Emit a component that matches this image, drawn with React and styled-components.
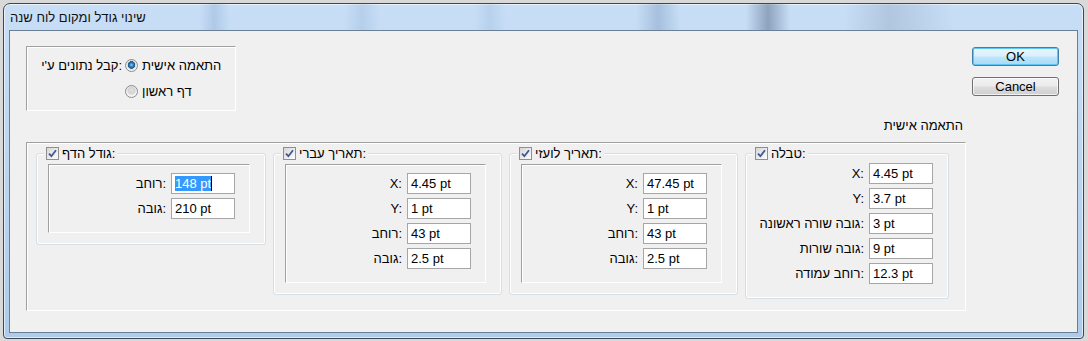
import React from 'react';
import styled, { createGlobalStyle, css } from 'styled-components';

const uiFont = `"Liberation Sans", "DejaVu Sans", sans-serif`;

const groups = [
  {
    title: 'גודל הדף:',
    width: 230,
    boxed: true,
    rows: [
      { label: 'רוחב:', value: '148 pt', selected: true },
      { label: 'גובה:', value: '210 pt' },
    ],
  },
  {
    title: 'תאריך עברי:',
    width: 229,
    boxed: true,
    rows: [
      { label: 'X:', value: '4.45 pt' },
      { label: 'Y:', value: '1 pt' },
      { label: 'רוחב:', value: '43 pt' },
      { label: 'גובה:', value: '2.5 pt' },
    ],
  },
  {
    title: 'תאריך לועזי:',
    width: 229,
    boxed: true,
    rows: [
      { label: 'X:', value: '47.45 pt' },
      { label: 'Y:', value: '1 pt' },
      { label: 'רוחב:', value: '43 pt' },
      { label: 'גובה:', value: '2.5 pt' },
    ],
  },
  {
    title: 'טבלה:',
    width: 204,
    boxed: false,
    rows: [
      { label: 'X:', value: '4.45 pt' },
      { label: 'Y:', value: '3.7 pt' },
      { label: 'גובה שורה ראשונה:', value: '3 pt' },
      { label: 'גובה שורות:', value: '9 pt' },
      { label: 'רוחב עמודה:', value: '12.3 pt' },
    ],
  },
];

function CheckBox() {
  return (
    <Check>
      <svg width="9" height="9" viewBox="0 0 9 9">
        <path d="M1 4.6 L3.4 7.2 L8 1.2" fill="none" stroke="#3f5892" strokeWidth="1.8" />
      </svg>
    </Check>
  );
}

function FieldRows({ rows }) {
  return (
    <Rows>
      {rows.map(row => (
        <Row key={row.label}>
          <RowLabel>{row.label}</RowLabel>
          <Field>
            {row.selected ? (
              <>
                <Selected>{row.value}</Selected>
                <Caret />
              </>
            ) : row.value}
          </Field>
        </Row>
      ))}
    </Rows>
  );
}

export default function App() {
  return (
    <>
      <GlobalStyle />
      <Window>
        <TitleBar>שינוי גודל ומקום לוח שנה</TitleBar>
        <Panel>
          <MainColumn>
            <SourceBox>
              <SourceLabel>קבל נתונים ע'י:</SourceLabel>
              <Option><Radio $checked />התאמה אישית</Option>
              <span />
              <Option><Radio />דף ראשון</Option>
            </SourceBox>
            <SectionLabel>התאמה אישית</SectionLabel>
            <BigBox>
              {groups.map(group => (
                <Group key={group.title} $width={group.width}>
                  <Legend>
                    <CheckBox />
                    {group.title}
                  </Legend>
                  {group.boxed ? (
                    <InnerBox>
                      <FieldRows rows={group.rows} />
                    </InnerBox>
                  ) : (
                    <PlainArea>
                      <FieldRows rows={group.rows} />
                    </PlainArea>
                  )}
                </Group>
              ))}
            </BigBox>
          </MainColumn>
          <Buttons>
            <Button $default>OK</Button>
            <Button>Cancel</Button>
          </Buttons>
        </Panel>
      </Window>
    </>
  );
}

const GlobalStyle = createGlobalStyle`
  html, body {
    margin: 0;
    padding: 0;
  }
  body {
    width: 1088px;
    height: 341px;
    overflow: hidden;
    background: #d9d9d9;
    font-family: ${uiFont};
    font-size: 13px;
    color: #000;
  }
`;

const etched = css`
  box-sizing: border-box;
  border: 1px solid;
  border-color: #a0a0a0 #ffffff #ffffff #a0a0a0;
  box-shadow: inset 1px 1px 0 #ffffff;
`;

const Window = styled.div`
  box-sizing: border-box;
  display: flex;
  flex-direction: column;
  margin: 3px 0 0 3px;
  width: 1081px;
  height: 336px;
  border: 1px solid #40464e;
  border-radius: 7px 7px 4px 4px;
  background: linear-gradient(#c8def6, #b9d4f0 60%, #aecbeb);
  box-shadow: inset 0 0 0 1px rgba(255, 255, 255, 0.6);
`;

// blurred glass: soft darker bands where the desktop shows through
const TitleBar = styled.div`
  display: flex;
  align-items: center;
  height: 26px;
  padding-left: 6px;
  border-radius: 6px 6px 0 0;
  font-size: 13px;
  color: #111;
  background-image:
    linear-gradient(90deg,
      transparent 196px, rgba(90, 130, 180, 0.22) 210px, transparent 226px,
      transparent 340px, rgba(90, 130, 180, 0.16) 358px, transparent 376px,
      transparent 470px, rgba(90, 130, 180, 0.14) 486px, transparent 502px,
      transparent 632px, rgba(70, 105, 150, 0.26) 654px, transparent 676px,
      transparent 742px, rgba(40, 60, 90, 0.36) 764px, transparent 786px,
      transparent 840px, rgba(60, 80, 110, 0.16) 885px, transparent 950px);
`;

const Panel = styled.div`
  flex: 1;
  display: flex;
  gap: 6px;
  margin: 0 5px 5px;
  padding: 15px 18px 0 16px;
  border: 1px solid #6a7f94;
  background: #f0f0f0;
`;

const MainColumn = styled.div`
  display: flex;
  flex-direction: column;
  width: 940px;
`;

const SourceBox = styled.div`
  ${etched};
  display: grid;
  grid-template-columns: 95px auto;
  grid-auto-rows: 16px;
  row-gap: 10px;
  align-content: start;
  align-items: center;
  width: 210px;
  height: 65px;
  padding-top: 10px;
`;

const SourceLabel = styled.span`
  text-align: right;
  white-space: nowrap;
`;

const Option = styled.label`
  display: flex;
  align-items: center;
  gap: 4px;
  padding-left: 3px;
  white-space: nowrap;
`;

const Radio = styled.span`
  box-sizing: border-box;
  width: 13px;
  height: 13px;
  border-radius: 50%;
  border: 1px solid #8a8a8a;
  background: ${p => p.$checked
    ? 'radial-gradient(circle at 50% 45%, #9fd4f7 0, #3a8fcf 1.5px, #1d5f97 3px, #2a5f8c 3.6px, #dadada 4px, #f4f4f4 5.5px)'
    : 'radial-gradient(circle at 50% 40%, #e2e2e2 0, #d3d3d3 3px, #f6f6f6 5.5px)'};
`;

const SectionLabel = styled.div`
  margin-top: 7px;
  height: 16px;
  line-height: 16px;
  padding-right: 3px;
  text-align: right;
`;

const BigBox = styled.div`
  ${etched};
  display: flex;
  align-items: flex-start;
  gap: 7px;
  margin-top: 8px;
  height: 169px;
  padding: 2px 0 0 9px;
`;

const Group = styled.fieldset`
  box-sizing: border-box;
  width: ${p => p.$width}px;
  min-width: 0;
  margin: 0;
  padding: 2px 15px 11px 11px;
  border: 1px solid #d5dfe5;
  border-radius: 3px;
  box-shadow: inset 0 0 0 1px #ffffff;
`;

const Legend = styled.legend`
  display: flex;
  align-items: center;
  gap: 3px;
  height: 16px;
  margin-left: -4px;
  padding: 0 2px;
  background: #f0f0f0;
  white-space: nowrap;
`;

const Check = styled.span`
  box-sizing: border-box;
  display: flex;
  align-items: center;
  justify-content: center;
  width: 13px;
  height: 13px;
  border: 1px solid #8e8f8f;
  background: linear-gradient(135deg, #d6d6d6, #fdfdfd);
`;

const InnerBox = styled.div`
  ${etched};
  margin-top: 1px;
  padding: 8px 14px 13px 0;
`;

const PlainArea = styled.div`
  padding-bottom: 3px;
`;

const Rows = styled.div`
  display: flex;
  flex-direction: column;
  gap: 4px;
`;

const Row = styled.div`
  display: flex;
  align-items: center;
  justify-content: flex-end;
  gap: 5px;
  height: 21px;
`;

const RowLabel = styled.span`
  white-space: nowrap;
`;

const Field = styled.div`
  box-sizing: border-box;
  display: flex;
  align-items: center;
  width: 64px;
  height: 21px;
  padding-left: 3px;
  border: 1px solid #a6a6a6;
  background: #ffffff;
  white-space: nowrap;
`;

const Selected = styled.span`
  background: #3399ff;
  color: #ffffff;
  line-height: 15px;
`;

const Caret = styled.span`
  width: 1px;
  height: 15px;
  background: #000;
`;

const Buttons = styled.div`
  display: flex;
  flex-direction: column;
  gap: 11px;
  padding-top: 1px;
`;

const Button = styled.button`
  box-sizing: border-box;
  width: 87px;
  height: 19px;
  padding: 0;
  border: 1px solid #707070;
  border-radius: 3px;
  font-family: ${uiFont};
  font-size: 13px;
  color: #000;
  background: linear-gradient(#f2f2f2 0%, #ebebeb 48%, #dddddd 52%, #cfcfcf 100%);
  box-shadow: inset 0 0 0 1px rgba(255, 255, 255, 0.7);

  ${p => p.$default && css`
    border-color: #3c7fb1;
    background: linear-gradient(#eaf6fd 0%, #d9f0fc 48%, #bee6fd 52%, #a7d9f5 100%);
    box-shadow: inset 0 0 0 1px #5fc6f4;
  `}
`;
